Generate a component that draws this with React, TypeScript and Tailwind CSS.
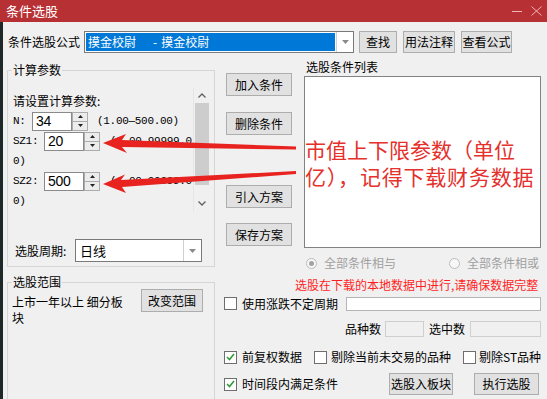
import React from 'react';

const btn =
  'flex shrink-0 items-center justify-center border border-[#adadad] bg-[#e1e1e1] text-[12px] leading-[16px] text-black whitespace-nowrap';

function DownTri() {
  return (
    <svg width="7" height="4" viewBox="0 0 7 4">
      <polygon points="0,0 7,0 3.5,4" fill="#8a8a8a" />
    </svg>
  );
}

function Spin() {
  return (
    <div className="flex h-[19px] w-[16px] flex-col">
      <div className="flex h-[10px] items-center justify-center border border-[#acacac] bg-[#ececec]">
        <svg width="5" height="3" viewBox="0 0 5 3">
          <polygon points="0,3 5,3 2.5,0" fill="#222" />
        </svg>
      </div>
      <div className="mt-[-1px] flex h-[10px] items-center justify-center border border-[#acacac] bg-[#ececec]">
        <svg width="5" height="3" viewBox="0 0 5 3">
          <polygon points="0,0 5,0 2.5,3" fill="#222" />
        </svg>
      </div>
    </div>
  );
}

function SpinInput({ value }: { value: string }) {
  return (
    <div className="flex shrink-0 items-center">
      <div className="flex h-[19px] w-[40px] items-center border border-[#8a8a8a] bg-white pl-[3px] font-['Liberation_Sans',sans-serif] text-[14px]">
        {value}
      </div>
      <Spin />
    </div>
  );
}

function Check({ checked }: { checked?: boolean }) {
  return (
    <div className="flex h-[13px] w-[13px] shrink-0 items-center justify-center border border-[#6e6e6e] bg-white">
      {checked && (
        <svg width="9" height="8" viewBox="0 0 9 8">
          <polyline points="1,4 3.5,6.5 8,1" fill="none" stroke="#2f9a35" strokeWidth="1.6" />
        </svg>
      )}
    </div>
  );
}

function Radio({ on }: { on?: boolean }) {
  return (
    <div className="flex h-[11px] w-[11px] shrink-0 items-center justify-center rounded-full border border-[#bcbcbc] bg-[#f7f7f7]">
      {on && <div className="h-[5px] w-[5px] rounded-full bg-[#a3a3a3]" />}
    </div>
  );
}

export default function App() {
  return (
    <div className="relative h-[399px] w-[547px] overflow-hidden whitespace-nowrap bg-[#f0f0f0] font-['Noto_Sans_CJK_SC',sans-serif] text-[12px] leading-[16px] text-black">
      {/* title bar */}
      <div className="flex h-[22px] items-center bg-[#b73034] text-white">
        <span className="ml-[6px] text-[13px] leading-[18px]">条件选股</span>
        <div className="ml-auto flex items-center">
          <div className="mr-[9px] h-[1px] w-[10px] bg-[#f2b4b4]" />
          <svg width="11" height="10" viewBox="0 0 11 10" className="mr-[5px]">
            <path d="M0.5 0.5 L10.5 9.5 M10.5 0.5 L0.5 9.5" stroke="#f2b4b4" strokeWidth="1" />
          </svg>
        </div>
      </div>

      <div className="flex h-[377px]">
        <div className="w-[3px] bg-[#1e2828]" />
        <div className="flex-1 pl-[4px]">
          {/* formula row */}
          <div className="mt-[9px] flex h-[22px] items-center">
            <span className="ml-[1px] w-[76px]">条件选股公式</span>
            <div className="flex h-[22px] w-[270px] border border-[#7a7a7a] bg-white">
              <div className="m-[1px] flex w-[250px] items-center bg-[#0078d7] pl-[2px] text-white">
                <span>摸金校尉</span>
                <span className="ml-[17px]">-</span>
                <span className="ml-[4px]">摸金校尉</span>
              </div>
              <div className="ml-auto flex w-[17px] items-center justify-center border-l border-[#d0d0d0]">
                <DownTri />
              </div>
            </div>
            <div className={`${btn} ml-[5px] h-[22px] w-[38px]`}>查找</div>
            <div className={`${btn} ml-[6px] h-[22px] w-[52px]`}>用法注释</div>
            <div className={`${btn} ml-[6px] h-[22px] w-[51px]`}>查看公式</div>
          </div>

          {/* main */}
          <div className="mt-[9px] flex">
            {/* left column */}
            <div className="w-[208px] shrink-0">
              <fieldset className="border border-[#d5d5d5] pb-[4px]">
                <legend className="ml-[4px] px-[1px] leading-[16px]">计算参数</legend>
                <div className="ml-[2px] mt-[10px] flex h-[124px] w-[199px] overflow-hidden">
                  <div className="flex-1 overflow-hidden pl-[3px] pt-[3px] font-['Liberation_Mono','Noto_Sans_CJK_SC',monospace] text-[11px] tracking-[-0.3px]">
                    <div className="flex h-[20px] items-center font-['Noto_Sans_CJK_SC',sans-serif] text-[12px] tracking-normal">
                      请设置计算参数:
                    </div>
                    <div className="flex h-[20px] items-center">
                      <span className="w-[19px] shrink-0">N:</span>
                      <SpinInput value="34" />
                      <span className="ml-[9px]">(1.00—500.00)</span>
                    </div>
                    <div className="flex h-[20px] items-center">
                      <span className="w-[31px] shrink-0">SZ1:</span>
                      <SpinInput value="20" />
                      <span className="ml-[10px] shrink-0">(1.00—99999.0</span>
                    </div>
                    <div className="flex h-[20px] items-center">0)</div>
                    <div className="flex h-[20px] items-center">
                      <span className="w-[31px] shrink-0">SZ2:</span>
                      <SpinInput value="500" />
                      <span className="ml-[10px] shrink-0">(1.00—99999.0</span>
                    </div>
                    <div className="flex h-[20px] items-center">0)</div>
                  </div>
                  <div className="flex w-[16px] shrink-0 flex-col items-center border-l border-[#e6e6e6]">
                    <div className="flex h-[15px] items-center justify-center">
                      <svg width="8" height="5" viewBox="0 0 8 5">
                        <polyline points="0.5,4.5 4,1 7.5,4.5" fill="none" stroke="#606060" strokeWidth="1.3" />
                      </svg>
                    </div>
                    <div className="h-[82px] w-[14px] bg-[#cdcdcd]" />
                    <div className="flex-1" />
                    <div className="flex h-[18px] items-center justify-center">
                      <svg width="8" height="5" viewBox="0 0 8 5">
                        <polyline points="0.5,0.5 4,4 7.5,0.5" fill="none" stroke="#606060" strokeWidth="1.3" />
                      </svg>
                    </div>
                  </div>
                </div>
                <div className="mt-[27px] flex h-[23px] items-center pl-[7px]">
                  <span className="w-[60px]">选股周期:</span>
                  <div className="flex h-[23px] w-[127px] border border-[#7a7a7a] bg-white">
                    <span className="flex flex-1 items-center pl-[4px] text-[13px]">日线</span>
                    <div className="flex w-[18px] items-center justify-center border-l border-[#d0d0d0]">
                      <DownTri />
                    </div>
                  </div>
                </div>
              </fieldset>

              <fieldset className="mt-[7px] h-[140px] border border-[#d5d5d5]">
                <legend className="ml-[4px] px-[1px] leading-[16px]">选股范围</legend>
                <div className="flex items-start">
                  <div className="w-[124px] whitespace-normal pl-[4px] pt-[4px]">上市一年以上 细分板块</div>
                  <div className={`${btn} ml-[9px] mt-[-1px] h-[23px] w-[62px]`}>改变范围</div>
                </div>
              </fieldset>
            </div>

            {/* right area */}
            <div className="ml-[9px] w-[317px] shrink-0">
              <div className="flex h-[186px]">
                <div className="ml-[2px] flex w-[66px] flex-col">
                  <div className={`${btn} mt-[11px] h-[23px]`}>加入条件</div>
                  <div className={`${btn} mt-[16px] h-[23px]`}>删除条件</div>
                  <div className={`${btn} mt-[50px] h-[23px]`}>引入方案</div>
                  <div className={`${btn} mt-[15px] h-[23px]`}>保存方案</div>
                </div>
                <div className="ml-[12px] w-[237px]">
                  <div className="ml-[2px] mt-[-1px] leading-[12px]">选股条件列表</div>
                  <div className="mt-[3px] h-[172px] border border-[#828282] bg-white pt-[59px] text-[21px] leading-[27px] text-[#e5302c]">
                    <div>市值上下限参数（单位</div>
                    <div className="tracking-[0.8px]">亿），记得下载财务数据</div>
                  </div>
                </div>
              </div>

              <div className="mt-[7px] flex h-[16px] items-center text-[#a0a0a0]">
                <div className="ml-[82px]">
                  <Radio on />
                </div>
                <span className="ml-[7px]">全部条件相与</span>
                <div className="ml-[53px]">
                  <Radio />
                </div>
                <span className="ml-[7px]">全部条件相或</span>
              </div>

              <div className="mt-[6px] flex h-[16px] items-center pl-[71px] text-[#ff1f1f]">
                选股在下载的本地数据中进行,请确保数据完整
              </div>

              <div className="mt-[2px] flex h-[17px] items-center">
                <Check />
                <span className="ml-[5px] shrink-0">使用涨跌不定周期</span>
                <div className="ml-[8px] h-[14px] flex-1 border border-[#b5b5b5] bg-white" />
              </div>

              <div className="mt-[9px] flex h-[16px] items-center">
                <span className="ml-[121px] shrink-0">品种数</span>
                <div className="ml-[4px] h-[16px] w-[39px] shrink-0 border border-[#cfcfcf]" />
                <span className="ml-[5px] shrink-0">选中数</span>
                <div className="ml-[5px] h-[16px] flex-1 border border-[#cfcfcf]" />
              </div>

              <div className="mt-[12px] flex h-[16px] items-center">
                <Check checked />
                <span className="ml-[5px] shrink-0">前复权数据</span>
                <div className="ml-[12px]">
                  <Check />
                </div>
                <span className="ml-[4px] shrink-0">剔除当前未交易的品种</span>
                <div className="ml-[12px]">
                  <Check />
                </div>
                <span className="ml-[3px] shrink-0">剔除ST品种</span>
              </div>

              <div className="mt-[8px] flex h-[22px] items-center">
                <Check checked />
                <span className="ml-[5px] shrink-0">时间段内满足条件</span>
                <div className={`${btn} ml-auto h-[22px] w-[64px]`}>选股入板块</div>
                <div className={`${btn} ml-[21px] mr-[2px] h-[22px] w-[65px]`}>执行选股</div>
              </div>
            </div>
          </div>
        </div>
      </div>

      {/* annotation arrows */}
      <svg className="pointer-events-none absolute left-0 top-0" width="547" height="399" viewBox="0 0 547 399">
        <polygon
          points="103,143 126,134 122,140 296,146.5 296,149.5 122,147 127,153"
          fill="#e8231f"
        />
        <polygon
          points="103,184 125,174.5 121,180 296,171 296,174 122,187 126,193"
          fill="#e8231f"
        />
      </svg>
    </div>
  );
}
